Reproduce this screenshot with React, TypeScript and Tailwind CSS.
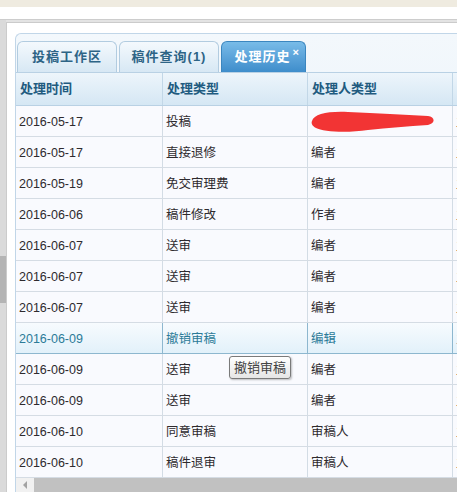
import React from "react";

type Row = {
  time: string;
  type: string;
  role: string;
  highlight?: boolean;
  redacted?: boolean;
};

const rows: Row[] = [
  { time: "2016-05-17", type: "投稿", role: "", redacted: true },
  { time: "2016-05-17", type: "直接退修", role: "编者" },
  { time: "2016-05-19", type: "免交审理费", role: "编者" },
  { time: "2016-06-06", type: "稿件修改", role: "作者" },
  { time: "2016-06-07", type: "送审", role: "编者" },
  { time: "2016-06-07", type: "送审", role: "编者" },
  { time: "2016-06-07", type: "送审", role: "编者" },
  { time: "2016-06-09", type: "撤销审稿", role: "编辑", highlight: true },
  { time: "2016-06-09", type: "送审", role: "编者" },
  { time: "2016-06-09", type: "送审", role: "编者" },
  { time: "2016-06-10", type: "同意审稿", role: "审稿人" },
  { time: "2016-06-10", type: "稿件退审", role: "审稿人" },
];

const font = { fontFamily: '"Liberation Sans", "Noto Sans CJK SC", sans-serif' };

function Tab({ label, active }: { label: string; active?: boolean }) {
  return (
    <div
      className={`relative flex h-[31px] items-center justify-center rounded-t-[6px] border border-b-0 text-[13px] font-bold tracking-[1px] ${
        active
          ? "w-[85px] border-[#3b86bf] bg-gradient-to-b from-[#78bbe8] to-[#3e8dcb] text-white"
          : "w-[100px] border-[#b2cce0] bg-gradient-to-b from-[#f4f9fd] to-[#d7e8f4] text-[#2d6486]"
      }`}
    >
      <span className={active ? "-ml-[2px]" : ""}>{label}</span>
      {active && (
        <span className="absolute right-[5px] top-[5px] text-[11px] font-bold leading-none text-white">×</span>
      )}
    </div>
  );
}

export default function App() {
  return (
    <div className="flex h-[492px] w-[457px] flex-col overflow-hidden bg-white" style={font}>
      <div className="h-[7px] shrink-0 bg-[#efebe0]" />
      <div className="h-[12px] shrink-0 bg-white" />

      <div className="flex min-h-0 flex-1 border-t border-[#cdcdcd] bg-[#e3e3e3]">
        {/* page scrollbar strip */}
        <div className="flex w-[6px] shrink-0 flex-col bg-[#dadada]">
          <div className="h-[236px]" />
          <div className="h-[47px] bg-[#b4b4b4]" />
        </div>

        <div className="mt-[2px] flex min-w-0 flex-1 flex-col border-l border-t border-[#cbcbcb] bg-white pl-[8px] pt-[10px]">
          <div className="flex min-h-0 flex-1 flex-col overflow-hidden rounded-tl-[6px] border-l border-t border-[#c1d6e8] bg-gradient-to-b from-[#f3f8fc] to-[#dcebf6]">
            {/* tabs */}
            <div className="flex h-[38px] shrink-0 items-end gap-[2px] pl-[1px]">
              <Tab label="投稿工作区" />
              <Tab label="稿件查询(1)" />
              <Tab label="处理历史" active />
            </div>

            {/* table */}
            <div className="flex min-h-0 flex-1 flex-col bg-[#f9fafe]">
              <div className="flex h-[34px] shrink-0 border-y border-[#b9d1e4] bg-gradient-to-b from-[#edf5fb] to-[#d5e7f4] text-[13px] font-bold text-[#1f5b80]">
                {["处理时间", "处理类型", "处理人类型", "处理人"].map((h, i) => (
                  <div
                    key={h}
                    className={`flex shrink-0 items-center border-[#c2d7e7] pl-[4px] ${
                      i === 0 ? "w-[147px] border-r" : i < 3 ? "w-[145px] border-r" : "w-[145px]"
                    }`}
                  >
                    {h}
                  </div>
                ))}
              </div>

              {rows.map((r, idx) => (
                <div
                  key={idx}
                  className={`relative flex h-[31px] shrink-0 border-b text-[12.5px] ${
                    r.highlight
                      ? "border-[#8db7cf] bg-gradient-to-b from-[#f7fbfe] to-[#e2f1fa] text-[#2c7b98]"
                      : "border-[#d5dce4] text-[#2e2a2e]"
                  }`}
                >
                  <div className={`flex w-[147px] shrink-0 items-center border-r pl-[3px] pt-[2px] ${r.highlight ? "border-[#8db7cf]" : "border-[#d3dce5]"}`}>
                    {r.time}
                  </div>
                  <div className={`flex w-[145px] shrink-0 items-center border-r pl-[3px] pt-[2px] ${r.highlight ? "border-[#8db7cf]" : "border-[#d3dce5]"}`}>
                    {r.type}
                  </div>
                  <div className={`relative flex w-[145px] shrink-0 items-center border-r pl-[3px] pt-[2px] ${r.highlight ? "border-[#8db7cf]" : "border-[#d3dce5]"}`}>
                    {r.role}
                    {r.redacted && (
                      <svg className="absolute left-0 top-0" width="145" height="31" viewBox="0 0 145 31">
                        <path
                          d="M4 15 C 6 8, 20 5, 40 6 C 70 7, 95 9, 120 10 C 127 11, 128 17, 120 19 C 100 20, 80 22, 60 24 C 40 27, 15 26, 8 22 C 4 20, 3 17, 4 15 Z"
                          fill="#f23434"
                        />
                      </svg>
                    )}
                  </div>
                  <div className="flex w-[145px] shrink-0 items-center pl-[3px] pt-[2px]">主编</div>

                  {r.highlight && (
                    <div className="absolute left-[213px] top-[33px] z-10 rounded-[3px] border border-[#7a7a7a] bg-gradient-to-b from-white to-[#e6e6e6] px-[4px] py-[2px] text-[13px] leading-[17px] text-[#444] shadow-[1px_1px_2px_rgba(0,0,0,0.25)]">
                      撤销审稿
                    </div>
                  )}
                </div>
              ))}

              {/* horizontal scrollbar */}
              <div className="flex h-[14px] shrink-0 items-center bg-[#f1f1f1]">
                <div className="flex w-[18px] items-center justify-center">
                  <div className="h-0 w-0 border-y-[4px] border-r-[4px] border-y-transparent border-r-[#a3a3a3]" />
                </div>
                <div className="h-full flex-1 bg-[#c1c1c1]" />
              </div>
            </div>
          </div>
        </div>
      </div>
    </div>
  );
}
